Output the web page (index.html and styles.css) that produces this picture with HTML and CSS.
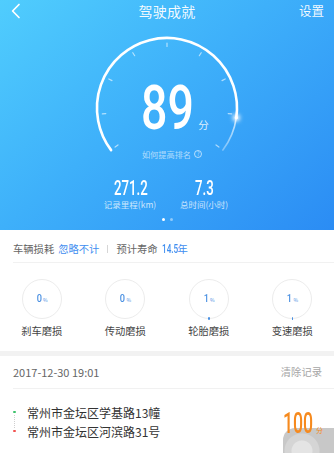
FILE: index.html
```html
<!DOCTYPE html>
<html lang="zh-CN">
<head>
<meta charset="utf-8">
<title>驾驶成就</title>
<link rel="stylesheet" href="styles.css">
</head>
<body>
<div class="page">
  <header class="hero">
    <div class="nav">
      <svg class="back" width="10" height="16" viewBox="0 0 10 16"><polyline points="8,1.5 1.6,8 8,14.5" fill="none" stroke="#fff" stroke-width="1.7" stroke-linecap="round" stroke-linejoin="round"/></svg>
      <div class="title">驾驶成就</div>
      <div class="setting">设置</div>
    </div>
    <div class="gauge">
      <svg class="dial" width="334" height="138" viewBox="0 0 334 138">
        <defs>
          <filter id="glow" x="-3" y="-3" width="7" height="7"><feGaussianBlur stdDeviation="2"/></filter>
          <linearGradient id="fade" x1="0" y1="0" x2="0" y2="1">
            <stop offset="0" stop-color="#fff" stop-opacity="0.75"/>
            <stop offset="1" stop-color="#fff" stop-opacity="0.35"/>
          </linearGradient>
        </defs>
        <path d="M111.1 128.1 A70 70 0 1 1 236.3 95.7" fill="none" stroke="#fff" stroke-width="2.6" stroke-linecap="round"/>
        <path d="M236.3 95.7 A70 70 0 0 1 222.9 128.1" fill="none" stroke="url(#fade)" stroke-width="1.6" stroke-linecap="round"/>
        <g stroke="#fff" stroke-opacity="0.6" stroke-width="1.2" stroke-linecap="round">
          <line x1="167" y1="21" x2="167" y2="24.5"/>
          <line x1="201.2" y1="30.7" x2="199.3" y2="33.7"/>
          <line x1="132.8" y1="30.7" x2="134.7" y2="33.7"/>
          <line x1="225.2" y1="57" x2="222" y2="58.6"/>
          <line x1="108.8" y1="57" x2="112" y2="58.6"/>
          <line x1="231.7" y1="91.9" x2="228.2" y2="91.6"/>
          <line x1="102.3" y1="91.9" x2="105.8" y2="91.6"/>
          <line x1="218.9" y1="125.1" x2="216" y2="122.9"/>
          <line x1="115.1" y1="125.1" x2="118" y2="122.9"/>
        </g>
        <circle cx="236.3" cy="95.7" r="3.5" fill="#fff" filter="url(#glow)"/>
        <circle cx="236.3" cy="95.7" r="1.6" fill="#fff"/>
      </svg>
      <div class="score"><span class="num"><span>89</span></span><span class="unit">分</span></div>
      <div class="rank">如何提高排名<span class="q">?</span></div>
    </div>
    <div class="stats">
      <div class="stat"><div class="val w271"><span>271.2</span></div><div class="lbl">记录里程(km)</div></div>
      <div class="stat"><div class="val w73"><span>7.3</span></div><div class="lbl">总时间(小时)</div></div>
    </div>
    <div class="dots"><i class="on"></i><i></i></div>
  </header>

  <section class="wear">
    <div class="summary">
      <span class="k">车辆损耗</span><span class="v">忽略不计</span>
      <span class="sep"></span>
      <span class="k">预计寿命</span><span class="v"><span class="life"><span>14.5</span></span>年</span>
    </div>
    <div class="rings">
      <div class="item"><div class="ring"><b>0</b><small>%</small></div><div class="name">刹车磨损</div></div>
      <div class="item"><div class="ring"><b>0</b><small>%</small></div><div class="name">传动磨损</div></div>
      <div class="item"><div class="ring p1"><b>1</b><small>%</small></div><div class="name">轮胎磨损</div></div>
      <div class="item"><div class="ring p1"><b>1</b><small>%</small></div><div class="name">变速磨损</div></div>
    </div>
  </section>

  <div class="band"></div>

  <section class="record">
    <div class="rec-head"><span class="time">2017-12-30 19:01</span><span class="clear">清除记录</span></div>
    <div class="routes">
      <div class="stops">
        <div class="stop"><i class="pin start"></i>常州市金坛区学基路13幢</div>
        <div class="stop"><i class="pin end"></i>常州市金坛区河滨路31号</div>
      </div>
      <div class="points"><span class="pnum"><span>100</span></span><span class="punit">分</span></div>
      <div class="float-btn"></div>
    </div>
  </section>
</div>
</body>
</html>
```

FILE: styles.css
```css
* { box-sizing: border-box; }
html, body { margin: 0; padding: 0; }
body {
  background: #fff;
  font-family: "Noto Sans CJK SC", "Noto Sans", sans-serif;
  width: 334px;
  height: 453px;
  overflow: hidden;
}
.page { width: 334px; height: 453px; overflow: hidden; }

/* hero */
.hero {
  height: 230px;
  background: linear-gradient(140deg, #50cdfd 0%, #3eb0fa 45%, #2b8cf4 100%);
  color: #fff;
}
.nav {
  height: 22px;
  display: grid;
  grid-template-columns: 1fr auto 1fr;
  align-items: center;
  padding: 0 10px;
}
.back { margin-left: 1px; display: block; }
.title { font-size: 14px; line-height: 22px; letter-spacing: 0.3px; color: rgba(255,255,255,0.95); }
.setting { justify-self: end; font-size: 12.5px; line-height: 22px; color: rgba(255,255,255,0.95); }

.gauge {
  position: relative;
  height: 138px;
  padding-top: 55px;
}
.dial { position: absolute; left: 0; top: 0; }
.score {
  position: relative;
  display: flex;
  justify-content: center;
  align-items: baseline;
  padding-left: 16px;
  height: 62px;
}
.num {
  display: inline-block;
  width: 52px;
  font-family: Roboto, sans-serif;
  font-weight: 500;
  font-size: 62px;
  line-height: 62px;
  white-space: nowrap;
}
.num span { display: inline-block; transform: scaleX(0.75); transform-origin: 0 50%; }
.unit { font-size: 10.5px; margin-left: 5px; color: rgba(255,255,255,0.85); }
.rank {
  position: relative;
  margin-top: 9px;
  display: flex;
  justify-content: center;
  align-items: center;
  gap: 3px;
  font-size: 8.2px;
  line-height: 12px;
  color: rgba(255,255,255,0.62);
  padding-left: 10px;
}
.q {
  display: inline-flex;
  align-items: center;
  justify-content: center;
  width: 8px;
  height: 8px;
  border: 0.8px solid rgba(255,255,255,0.62);
  border-radius: 50%;
  font-size: 6px;
  line-height: 1;
}
.stats {
  display: flex;
  justify-content: center;
  padding-top: 19px;
}
.stat { width: 74px; display: flex; flex-direction: column; align-items: center; }
.val {
  font-family: Roboto, sans-serif;
  font-weight: 500;
  font-size: 19.5px;
  line-height: 20px;
  height: 20px;
  white-space: nowrap;
}
.val span { display: inline-block; transform: scaleX(0.68); transform-origin: 0 50%; }
.w271 { width: 33px; }
.w73 { width: 19px; }
.lbl { font-size: 8.5px; line-height: 9px; margin-top: 0.5px; color: rgba(255,255,255,0.75); }
.dots { display: flex; justify-content: center; gap: 5px; margin-top: 9px; }
.dots i { width: 3px; height: 3px; border-radius: 50%; background: rgba(255,255,255,0.45); }
.dots i.on { background: #fff; }

/* wear */
.summary {
  margin-left: 13px;
  padding: 12px 0 6px;
  border-bottom: 1px solid #f1f1f1;
  display: flex;
  align-items: center;
  font-size: 10.3px;
  line-height: 14px;
  color: #666;
}
.summary .v { color: #3f8ef0; margin-left: 4px; }
.sep { width: 1px; height: 8px; background: #d6d6d6; margin: 0 8px; }
.life {
  display: inline-block;
  width: 15px;
  font-family: Roboto, sans-serif;
  font-weight: 500;
  font-size: 12px;
  white-space: nowrap;
  margin-right: 1px;
}
.life span { display: inline-block; transform: scaleX(0.68); transform-origin: 0 50%; }
.rings {
  display: grid;
  grid-template-columns: repeat(4, 1fr);
  padding: 16px 0 13px;
}
.item { display: flex; flex-direction: column; align-items: center; }
.ring {
  position: relative;
  width: 40px;
  height: 40px;
  border: 1.5px solid #ececec;
  border-radius: 50%;
  display: flex;
  align-items: baseline;
  justify-content: center;
  padding-top: 12px;
  color: #4a90e2;
}
.ring b { font-family: Roboto, sans-serif; font-weight: 500; font-size: 11.5px; line-height: 12px; transform: scaleX(0.8); }
.ring small { font-size: 5px; margin-left: 0.5px; }
.ring.p1::after {
  content: "";
  position: absolute;
  left: 50%;
  bottom: -1.5px;
  width: 1.5px;
  height: 2.5px;
  margin-left: -0.75px;
  background: #4a90e2;
  border-radius: 1px;
}
.name { margin-top: 5px; font-size: 10.3px; line-height: 14px; color: #444; }

.band { height: 5px; background: #f2f2f2; }

/* record */
.rec-head {
  margin-left: 13px;
  padding: 9px 12px 9px 0;
  border-bottom: 1px solid #f1f1f1;
  display: flex;
  justify-content: space-between;
  align-items: center;
  line-height: 14px;
}
.time { font-size: 11px; color: #666; }
.clear { font-size: 10.3px; color: #a5a5a5; }
.routes {
  position: relative;
  display: flex;
  padding: 13.5px 11px 0 13px;
  height: 64px;
}
.stops { flex: 1; }
.stop {
  display: flex;
  align-items: center;
  font-size: 12px;
  line-height: 19px;
  color: #333;
}
.pin {
  position: relative;
  width: 2.5px;
  height: 2.5px;
  border-radius: 50%;
  margin-right: 11.5px;
  flex: none;
}
.pin.start { background: #3cc26b; }
.pin.end { background: #f2524f; }
.pin.start::after {
  content: "";
  position: absolute;
  left: 0.75px;
  top: 4px;
  height: 13px;
  border-left: 1px dotted #cfcfcf;
}
.points {
  position: relative;
  z-index: 1;
  margin-top: 5.5px;
  display: flex;
  align-items: baseline;
  height: 30px;
  color: #f68a1e;
}
.pnum {
  display: inline-block;
  width: 30px;
  font-family: Roboto, sans-serif;
  font-weight: 500;
  font-size: 29.5px;
  line-height: 30px;
  white-space: nowrap;
}
.pnum span { display: inline-block; transform: scaleX(0.6); transform-origin: 0 50%; }
.punit { font-size: 7px; margin-left: 3px; }
.float-btn {
  position: absolute;
  left: 283px;
  top: 39px;
  width: 51px;
  height: 25px;
  border-radius: 12px 0 0 0;
  background: radial-gradient(circle at 19px 23px, #e4e4e4 0 10px, #d5d5d5 11px 17px, #c8c8c8 18px);
}
```
